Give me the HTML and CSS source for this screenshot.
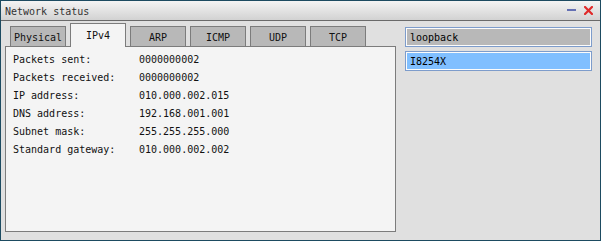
FILE: index.html
```html
<!DOCTYPE html>
<html lang="en">
<head>
  <meta charset="UTF-8">
  <meta name="viewport" content="width=device-width, initial-scale=1.0">
  <title>Network status</title>
  <link rel="stylesheet" href="styles.css">
</head>
<body>
  <div class="window">
    <div class="titlebar">
      <span class="title">Network status</span>
      <div class="title-btns">
        <svg class="btn-min" width="9" height="9" viewBox="0 0 9 9">
          <rect x="0" y="3" width="9" height="2" fill="#6470b4"/>
        </svg>
        <svg class="btn-close" width="9" height="9" viewBox="0 0 9 9">
          <path d="M1 1 L8 8 M8 1 L1 8" stroke="#e02a2a" stroke-width="2.2" stroke-linecap="square"/>
        </svg>
      </div>
    </div>

    <div class="content">
      <div class="tab-area">
        <div class="tabs">
          <div class="tab">Physical</div>
          <div class="tab active">IPv4</div>
          <div class="tab">ARP</div>
          <div class="tab">ICMP</div>
          <div class="tab">UDP</div>
          <div class="tab">TCP</div>
        </div>
        <div class="panel">
          <div class="info">
            <span>Packets sent:</span><span>0000000002</span>
            <span>Packets received:</span><span>0000000002</span>
            <span>IP address:</span><span>010.000.002.015</span>
            <span>DNS address:</span><span>192.168.001.001</span>
            <span>Subnet mask:</span><span>255.255.255.000</span>
            <span>Standard gateway:</span><span>010.000.002.002</span>
          </div>
        </div>
      </div>

      <div class="iface-list">
        <div class="iface">loopback</div>
        <div class="iface selected">I8254X</div>
      </div>
    </div>
  </div>
</body>
</html>
```

FILE: styles.css
```css
html, body {
  margin: 0;
  padding: 0;
}

body {
  font-family: "DejaVu Sans Mono", "Liberation Mono", monospace;
  font-size: 10px;
  color: #111;
  background: #e0e0e0;
}

.window {
  width: 601px;
  height: 241px;
  box-sizing: border-box;
  border: 1px solid #1d4b61;
  background: #e0e0e0;
  display: flex;
  flex-direction: column;
}

.titlebar {
  height: 19px;
  border-bottom: 1px solid #6a6a6a;
  background: linear-gradient(#f4f4f4, #d2d2d2);
  display: flex;
  align-items: center;
  justify-content: space-between;
  padding: 0 7px 0 4px;
  flex-shrink: 0;
}

.title {
  color: #333;
  line-height: 19px;
  padding-top: 2px;
}

.title-btns {
  display: flex;
  align-items: center;
  gap: 8px;
}

.content {
  flex: 1;
  display: flex;
  padding: 0 8px 8px 4px;
  gap: 9px;
}

.tab-area {
  width: 391px;
  display: flex;
  flex-direction: column;
}

.tabs {
  height: 25px;
  display: flex;
  align-items: flex-end;
  gap: 4px;
  padding-left: 5px;
}

.tab {
  width: 56px;
  height: 20px;
  box-sizing: border-box;
  border: 1px solid #7c7c7c;
  border-bottom: none;
  background: #b8b8b8;
  display: flex;
  align-items: center;
  justify-content: center;
  padding-top: 1px;
}

.tab.active {
  height: 24px;
  margin-bottom: -1px;
  background: #f4f4f4;
  position: relative;
  z-index: 1;
  padding-top: 0;
}

.panel {
  flex: 1;
  border: 1px solid #7c7c7c;
  background: #f4f4f4;
  padding: 4px 7px;
}

.info {
  display: grid;
  grid-template-columns: 126px auto;
  line-height: 18px;
}

.iface-list {
  flex: 1;
  display: flex;
  flex-direction: column;
  gap: 4px;
  padding-top: 6px;
}

.iface {
  height: 20px;
  box-sizing: border-box;
  border: 1px solid #7d9ccb;
  box-shadow: inset 0 0 0 1px #fcfcfc;
  background: #b8b8b8;
  padding-left: 4px;
  display: flex;
  align-items: center;
  color: #000;
}

.iface.selected {
  background: #80bfff;
}
```
